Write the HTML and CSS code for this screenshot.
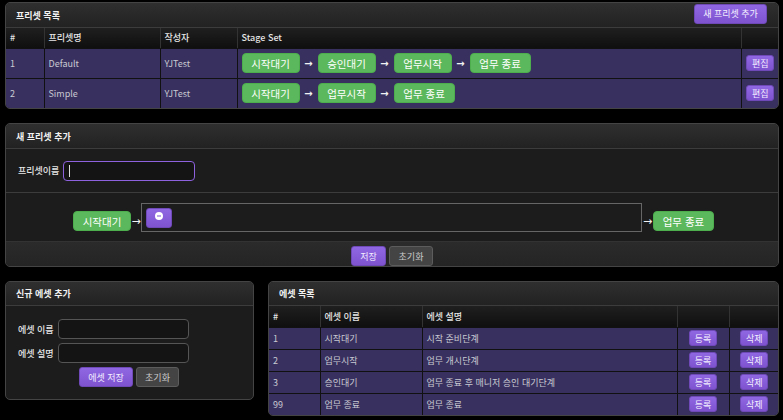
FILE: index.html
```html
<!DOCTYPE html>
<html lang="ko">
<head>
<meta charset="utf-8">
<title>프리셋 목록</title>
<link rel="stylesheet" href="styles.css">
</head>
<body>
<main class="page">
  <section class="card preset-list">
    <header class="card-head tall">
      <h2>프리셋 목록</h2>
      <button class="btn primary add">새 프리셋 추가</button>
    </header>
    <table class="grid presets">
      <colgroup><col class="p1"><col class="p2"><col class="p3"><col class="p4"><col class="p5"></colgroup>
      <thead><tr><th>#</th><th>프리셋명</th><th>작성자</th><th>Stage Set</th><th></th></tr></thead>
      <tbody>
        <tr>
          <td>1</td><td>Default</td><td>YJTest</td>
          <td><div class="flow"><span class="stage">시작대기</span><span class="arrow">→</span><span class="stage">승인대기</span><span class="arrow">→</span><span class="stage">업무시작</span><span class="arrow">→</span><span class="stage">업무 종료</span></div></td>
          <td class="act"><button class="btn primary mini">편집</button></td>
        </tr>
        <tr>
          <td>2</td><td>Simple</td><td>YJTest</td>
          <td><div class="flow"><span class="stage">시작대기</span><span class="arrow">→</span><span class="stage">업무시작</span><span class="arrow">→</span><span class="stage">업무 종료</span></div></td>
          <td class="act"><button class="btn primary mini">편집</button></td>
        </tr>
      </tbody>
    </table>
  </section>

  <section class="card preset-new">
    <header class="card-head"><h2>새 프리셋 추가</h2></header>
    <div class="name-row">
      <label class="lbl">프리셋이름</label>
      <span class="field-wrap"><input class="field focus" type="text"><i class="caret"></i></span>
    </div>
    <div class="builder">
      <span class="stage">시작대기</span><span class="arrow thin left">→</span>
      <div class="dropzone">
        <button class="btn primary plus" aria-label="추가">
          <svg width="8" height="8" viewBox="0 0 10 10"><circle cx="5" cy="5" r="5" fill="#fff"/><rect x="2.5" y="4.3" width="5" height="1.4" fill="#8e62de"/></svg>
        </button>
      </div>
      <span class="arrow thin right">→</span><span class="stage">업무 종료</span>
    </div>
    <footer class="card-foot">
      <button class="btn primary foot-btn">저장</button>
      <button class="btn ghost foot-btn wider">초기화</button>
    </footer>
  </section>

  <div class="bottom">
    <section class="card stage-new">
      <header class="card-head short"><h2>신규 에셋 추가</h2></header>
      <div class="form">
        <div class="form-row"><label class="lbl">에셋 이름</label><input class="field wide" type="text"></div>
        <div class="form-row"><label class="lbl">에셋 설명</label><input class="field wide" type="text"></div>
        <div class="form-btns">
          <button class="btn primary form-btn">에셋 저장</button>
          <button class="btn ghost form-btn">초기화</button>
        </div>
      </div>
    </section>
    <section class="card stage-list">
      <header class="card-head short"><h2>에셋 목록</h2></header>
      <table class="grid assets">
        <colgroup><col class="a1"><col class="a2"><col class="a3"><col class="a4"><col class="a5"></colgroup>
        <thead><tr><th>#</th><th>에셋 이름</th><th>에셋 설명</th><th></th><th></th></tr></thead>
        <tbody>
          <tr><td>1</td><td>시작대기</td><td>시작 준비단계</td><td class="act"><button class="btn primary mini">등록</button></td><td class="act"><button class="btn primary mini">삭제</button></td></tr>
          <tr><td>2</td><td>업무시작</td><td>업무 개시단계</td><td class="act"><button class="btn primary mini">등록</button></td><td class="act"><button class="btn primary mini">삭제</button></td></tr>
          <tr><td>3</td><td>승인대기</td><td>업무 종료 후 매니저 승인 대기단계</td><td class="act"><button class="btn primary mini">등록</button></td><td class="act"><button class="btn primary mini">삭제</button></td></tr>
          <tr><td>99</td><td>업무 종료</td><td>업무 종료</td><td class="act"><button class="btn primary mini">등록</button></td><td class="act"><button class="btn primary mini">삭제</button></td></tr>
        </tbody>
      </table>
    </section>
  </div>
</main>
</body>
</html>
```
FILE: styles.css
```css
* { box-sizing: border-box; }
html, body { margin: 0; height: 100%; background: #000; overflow: hidden; }
body { font-family: "Noto Sans CJK KR", "Liberation Sans", sans-serif; font-size: 9px; color: #ddd; }
.page { padding: 2px 4px 0 5px; display: flex; flex-direction: column; }
.card { background: #1c1c1c; border: 1px solid #444; border-radius: 5px; overflow: hidden; }
.preset-list { margin-bottom: 14px; }
.preset-new { margin-bottom: 14px; }
.card-head {
  height: 25px; display: flex; align-items: center; justify-content: space-between;
  padding: 0 11px 0 10px; background: linear-gradient(#2f2f2f, #222); border-bottom: 1px solid #3c3c3c;
}
.card-head.short { height: 24px; }
.card-head h2 { margin: 0; font-size: 9px; font-weight: 700; color: #f2f2f2; }
.btn { font-family: inherit; font-size: 9px; border-radius: 3px; padding: 0; cursor: pointer; }
.primary { color: #f4f0ff; background: linear-gradient(#9067e2, #7f53d0); border: 1px solid #6f49b8; }
.ghost { color: #ccc; background: #444; border: 1px solid #5c5c5c; }
.add { width: 73px; height: 20px; margin-top: -3px; }
.grid { width: 100%; border-collapse: collapse; table-layout: fixed; }
.grid th {
  background: linear-gradient(#1f1f1f, #0f0f0f); color: #e6e6e6; font-weight: 500; text-align: left;
  height: 20px; padding: 0 4px; border-right: 1px solid #333; border-bottom: 1px solid #111;
}
.assets th { height: 21px; }
.grid th:last-child, .grid td:last-child { border-right: 0; }
.grid td {
  background: #38315f; color: #c9c9d2; padding: 0 4px; border-right: 1px solid #111; border-bottom: 1px solid #111;
}
.grid tr:last-child td { border-bottom: 0; }
.presets td { height: 30px; }
.assets td { height: 22px; }
.p1 { width: 38px; } .p2 { width: 116px; } .p3 { width: 77px; } .p4 { width: 504px; } .p5 { width: 38px; }
.a1 { width: 51px; } .a2 { width: 102px; } .a3 { width: 255px; } .a4 { width: 52px; } .a5 { width: 50px; }
.flow { display: flex; align-items: center; }
.stage {
  display: inline-flex; align-items: center; justify-content: center; height: 20px; padding: 0 8.7px;
  background: #5cb85c; border: 1px solid #4cae4c; border-radius: 4px; color: #fff; font-size: 10.5px; white-space: nowrap;
}
.arrow {
  display: inline-flex; align-items: center; justify-content: center; height: 20px; width: 18px;
  color: #f2f2f2; font-size: 10px; font-weight: 700; font-family: "DejaVu Sans", sans-serif;
}
.arrow.thin { font-size: 11px; font-weight: 400; }
.arrow.left { width: 10px; }
.arrow.right { width: 11px; }
.act { text-align: center; padding: 0 !important; }
.mini { width: 28px; height: 16px; display: block; margin: 0 auto; }
.name-row { height: 44px; display: flex; align-items: center; padding-left: 12px; border-bottom: 1px solid #3c3c3c; gap: 4px; }
.lbl { color: #e6e6e6; font-weight: 500; white-space: nowrap; }
.field-wrap { position: relative; display: block; }
.field { display: block; height: 20px; background: #141414; border: 1px solid #555; border-radius: 4px; color: #ddd; outline: 0; }
.field.focus { width: 132px; border-color: #8e62de; }
.caret { position: absolute; left: 6px; top: 4px; width: 1px; height: 12px; background: #ddd; }
.builder { height: 48px; display: flex; align-items: flex-start; padding: 10px 0 0 67px; }
.builder .stage, .builder .arrow { margin-top: 8px; }
.dropzone { width: 501px; height: 29px; border: 1px solid #666; padding: 4px; }
.plus { display: flex; align-items: center; justify-content: center; width: 26px; height: 20px; padding-bottom: 4px; }
.card-foot { height: 25px; padding-top: 4px; background: linear-gradient(#2b2b2b, #242424); border-top: 1px solid #333; display: flex; justify-content: center; align-items: center; gap: 3px; }
.foot-btn { width: 35px; height: 20px; }
.foot-btn.wider { width: 44px; }
.bottom { display: grid; grid-template-columns: 249px 511px; gap: 14px; align-items: start; }
.form { padding: 13px 0 0 12px; }
.form-row { display: flex; align-items: center; gap: 4px; height: 20px; margin-bottom: 4px; }
.wide { width: 131px; }
.form-btns { display: flex; gap: 3px; padding-left: 61px; }
.form-btn { height: 20px; width: 54px; }
.form-btn.ghost { width: 43px; }
.stage-new { height: 119px; }
```
